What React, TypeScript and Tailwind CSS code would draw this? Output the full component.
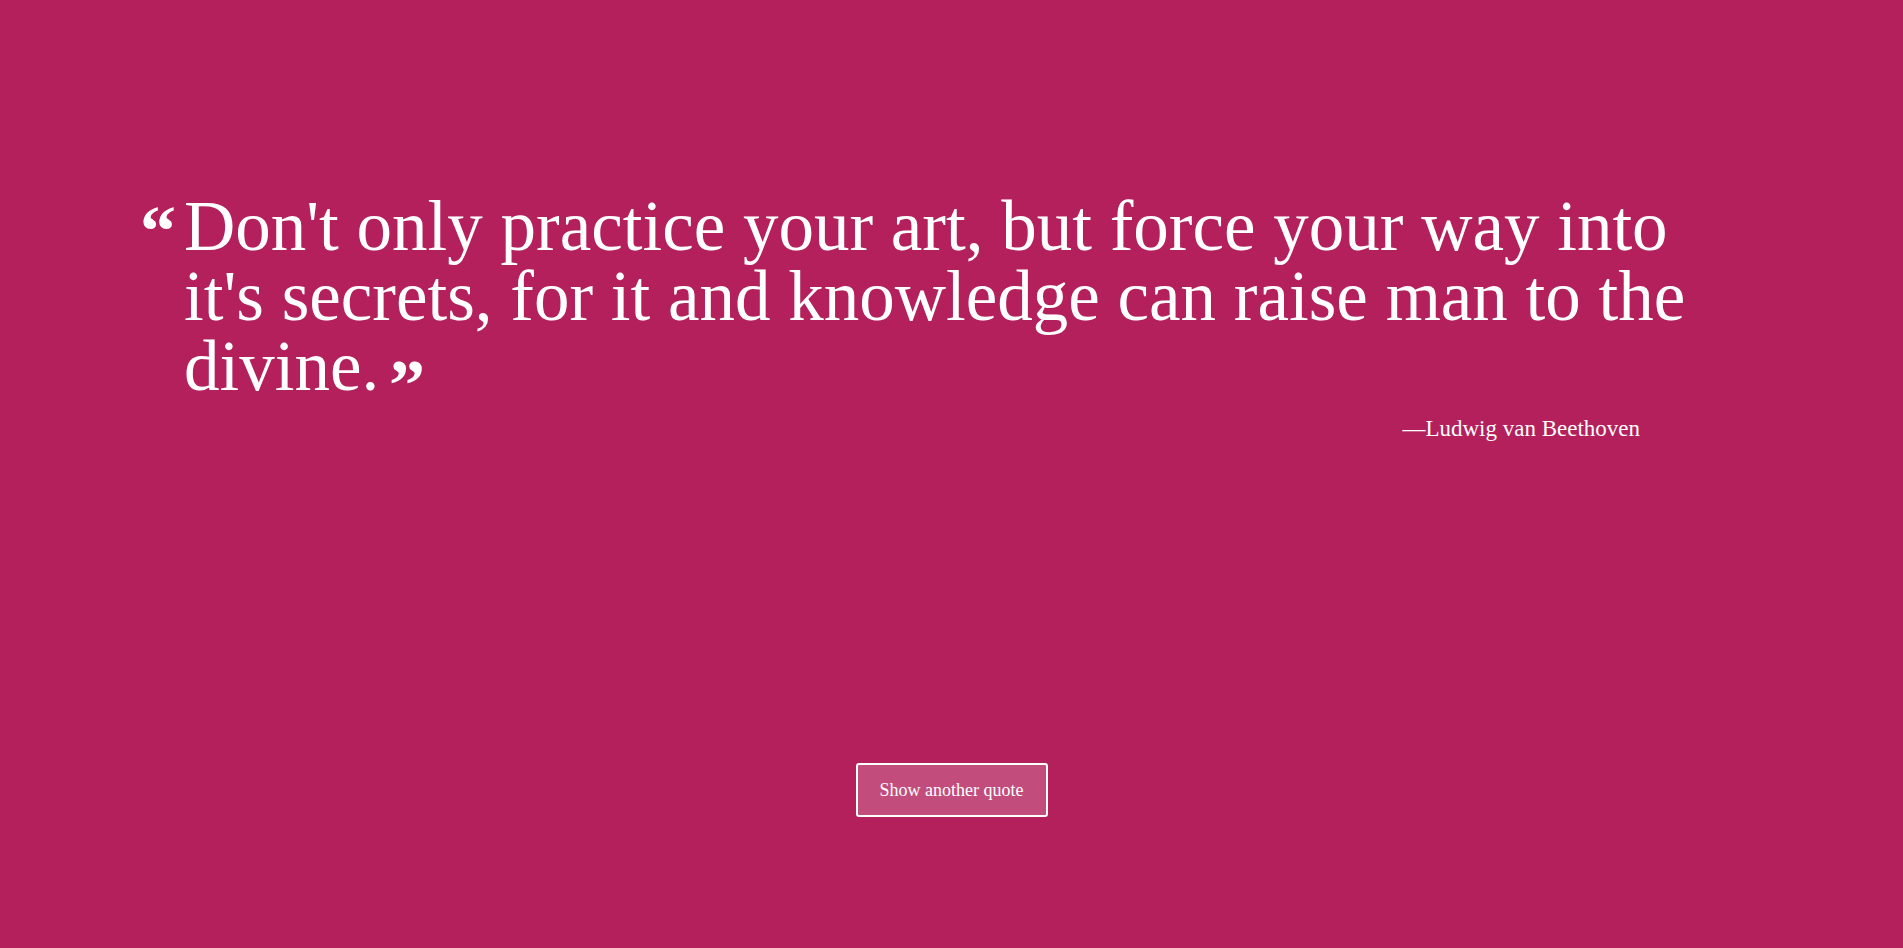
export default function App() {
  return (
    <main className="min-h-screen w-full bg-[#b3205c] text-white font-['Liberation_Serif',serif] flex flex-col items-center">
      <section className="w-[1623px] pt-[191px]">
        <div className="flex">
          <span className="w-[44px] shrink-0 mt-[4px] text-[72px] leading-none font-bold">&ldquo;</span>
          <p className="w-[1540px] text-[71px] leading-[70px]">
            Don't only practice your art, but force your way into it's secrets, for it and knowledge can raise man to the divine.{" "}
            <span className="-ml-[8px] align-[-19px] text-[72px] leading-[0] font-bold">&rdquo;</span>
          </p>
        </div>
        <div className="mt-[14px] pr-[123px] text-right text-[23px] leading-[28px]">
          &mdash;Ludwig van Beethoven
        </div>
      </section>

      <button className="mt-[320px] h-[54px] w-[192px] rounded-[3px] border-2 border-white bg-white/20 text-[18px] text-white">
        Show another quote
      </button>
    </main>
  );
}
